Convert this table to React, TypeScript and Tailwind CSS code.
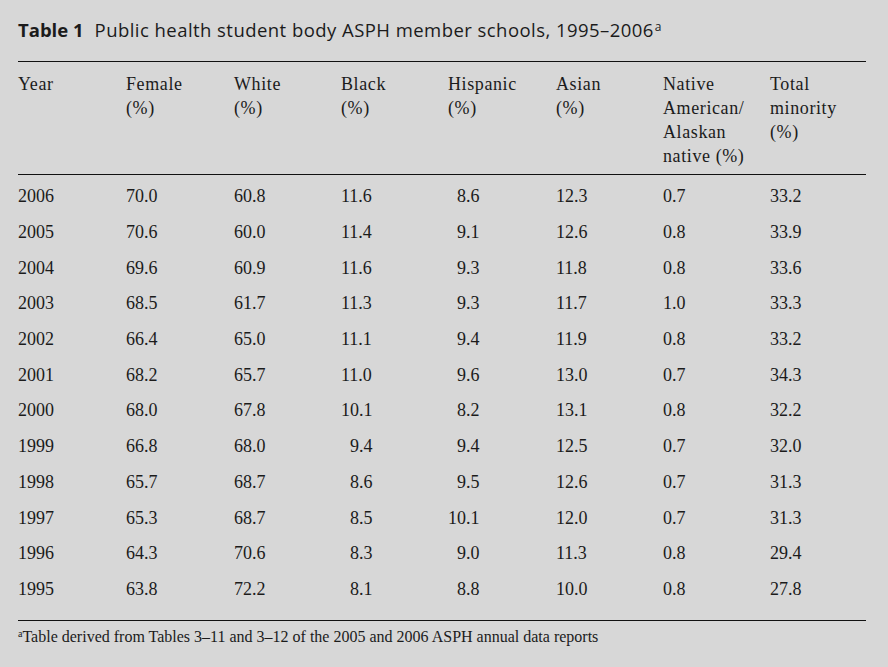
const headers: string[][] = [
  ['Year'],
  ['Female', '(%)'],
  ['White', '(%)'],
  ['Black', '(%)'],
  ['Hispanic', '(%)'],
  ['Asian', '(%)'],
  ['Native', 'American/', 'Alaskan', 'native (%)'],
  ['Total', 'minority', '(%)'],
];

const rows: string[][] = [
  ['2006', '70.0', '60.8', '11.6', '8.6', '12.3', '0.7', '33.2'],
  ['2005', '70.6', '60.0', '11.4', '9.1', '12.6', '0.8', '33.9'],
  ['2004', '69.6', '60.9', '11.6', '9.3', '11.8', '0.8', '33.6'],
  ['2003', '68.5', '61.7', '11.3', '9.3', '11.7', '1.0', '33.3'],
  ['2002', '66.4', '65.0', '11.1', '9.4', '11.9', '0.8', '33.2'],
  ['2001', '68.2', '65.7', '11.0', '9.6', '13.0', '0.7', '34.3'],
  ['2000', '68.0', '67.8', '10.1', '8.2', '13.1', '0.8', '32.2'],
  ['1999', '66.8', '68.0', '9.4', '9.4', '12.5', '0.7', '32.0'],
  ['1998', '65.7', '68.7', '8.6', '9.5', '12.6', '0.7', '31.3'],
  ['1997', '65.3', '68.7', '8.5', '10.1', '12.0', '0.7', '31.3'],
  ['1996', '64.3', '70.6', '8.3', '9.0', '11.3', '0.8', '29.4'],
  ['1995', '63.8', '72.2', '8.1', '8.8', '10.0', '0.8', '27.8'],
];

const cols = 'grid grid-cols-[108px_108px_107px_107px_108px_107px_107px_1fr]';

// pads single-digit values in the Black / Hispanic columns so decimals line up
function Cell({ value, col }: { value: string; col: number }) {
  const pad = (col === 3 || col === 4) && value.length === 3;
  return (
    <div>
      {pad && <span className="invisible">1</span>}
      {value}
    </div>
  );
}

export default function App() {
  return (
    <div className="w-[888px] h-[667px] bg-[#d7d7d7] text-[#1b1b1b] overflow-hidden">
      {/* Caption */}
      <div className="pl-[18px] pt-[17px] h-[61px] text-[18.5px] leading-[26px] font-['Open_Sans','Noto_Sans',sans-serif] tracking-[0.45px]">
        <span className="font-bold tracking-[0px]">Table 1</span>
        <span className="ml-[11px]">Public health student body ASPH member schools, 1995–2006</span>
        <sup className="text-[12px] ml-[1px]">a</sup>
      </div>

      <div className="ml-[18px] w-[848px] font-['Liberation_Serif',serif] text-[18px]">
        {/* Column heads */}
        <div className={`${cols} border-t border-b border-[#111] pt-[10px] pb-[6px] leading-[24px] tracking-[0.6px]`}>
          {headers.map((h, i) => (
            <div key={i}>
              {h.map((line, j) => (
                <div key={j}>{line}</div>
              ))}
            </div>
          ))}
        </div>

        {/* Body */}
        <div className="pt-[4px] pb-[13px] border-b border-[#111]">
          {rows.map((r) => (
            <div key={r[0]} className={`${cols} h-[35.7px] items-center`}>
              {r.map((v, i) => (
                <Cell key={i} value={v} col={i} />
              ))}
            </div>
          ))}
        </div>

        {/* Footnote */}
        <div className="pt-[6px] text-[16px] leading-[20px]">
          <sup className="text-[10px]">a</sup>Table derived from Tables 3–11 and 3–12 of the 2005 and 2006 ASPH annual data reports
        </div>
      </div>
    </div>
  );
}
